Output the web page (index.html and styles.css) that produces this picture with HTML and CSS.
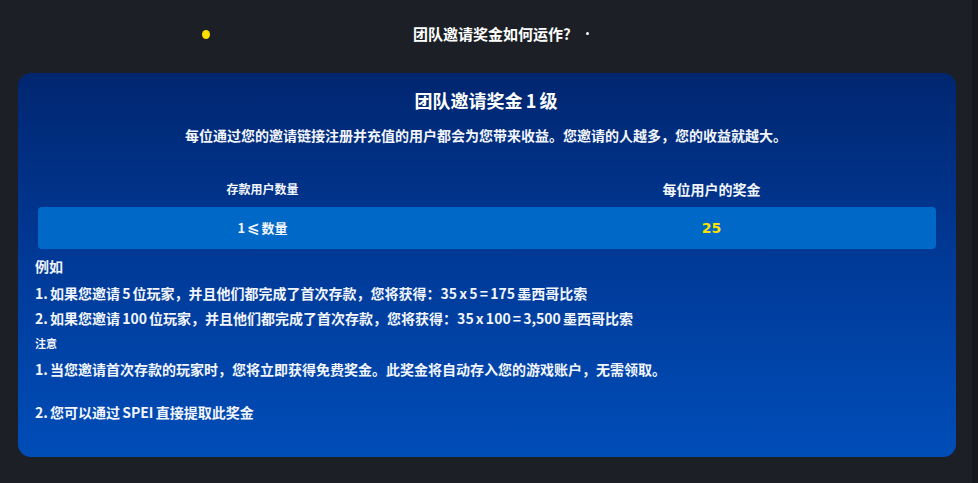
FILE: index.html
```html
<!DOCTYPE html>
<html lang="zh">
<head>
<meta charset="utf-8">
<title>团队邀请奖金</title>
<link rel="stylesheet" href="styles.css">
</head>
<body>
<div class="page">
  <main class="main">
    <header class="head">
      <span class="dot-yellow"></span>
      <h1 class="head-title">团队邀请奖金如何运作?</h1>
      <span class="dot-white"></span>
    </header>
    <section class="card">
      <h2 class="card-title">团队邀请奖金 1 级</h2>
      <p class="card-sub">每位通过您的邀请链接注册并充值的用户都会为您带来收益。您邀请的人越多，您的收益就越大。</p>
      <div class="table">
        <div class="thead">
          <div class="th th-small">存款用户数量</div>
          <div class="th">每位用户的奖金</div>
        </div>
        <div class="trow">
          <div class="td">1 <span class="le">⩽</span> 数量</div>
          <div class="td td-value">25</div>
        </div>
      </div>
      <div class="notes">
        <div class="label">例如</div>
        <div class="line line-first">1. 如果您邀请 5 位玩家，并且他们都完成了首次存款，您将获得：35 x 5 = 175 墨西哥比索</div>
        <div class="line">2. 如果您邀请 100 位玩家，并且他们都完成了首次存款，您将获得：35 x 100 = 3,500 墨西哥比索</div>
        <div class="label label-small">注意</div>
        <div class="line line-note1">1. 当您邀请首次存款的玩家时，您将立即获得免费奖金。此奖金将自动存入您的游戏账户，无需领取。</div>
        <div class="line line-note2">2. 您可以通过 SPEI 直接提取此奖金</div>
      </div>
    </section>
  </main>
  <div class="scrollbar"></div>
</div>
</body>
</html>
```

FILE: styles.css
```css
* { box-sizing: border-box; }
html, body {
  margin: 0;
  padding: 0;
  height: 100%;
  background: #1c1f26;
}
body {
  font-family: "Noto Sans CJK SC", "Noto Sans", sans-serif;
  color: #f2f5fc;
  font-weight: 700;
  word-spacing: -1px;
}
.page {
  display: flex;
  height: 483px;
  overflow: hidden;
}
.main {
  flex: 1;
  min-width: 0;
}
.scrollbar {
  width: 6px;
  background: #16181e;
}
.head {
  display: flex;
  align-items: center;
  height: 67px;
  padding-left: 202px;
}
.dot-yellow {
  width: 8px;
  height: 9px;
  border-radius: 50%;
  background: #ffdf00;
  margin-right: 203px;
  margin-top: 2px;
}
.head-title {
  margin: 0;
  font-size: 15px;
  line-height: 22px;
  font-weight: 700;
  color: #ffffff;
}
.dot-white {
  width: 3px;
  height: 3px;
  border-radius: 50%;
  background: #ffffff;
  margin-left: 15px;
}
.card {
  margin: 6px 16px 0 18px;
  border-radius: 13px;
  background: linear-gradient(180deg, #012670 0%, #003a98 50%, #004db8 100%);
  padding: 15px 20px 31px 17px;
  height: 384px;
}
.card-title {
  margin: 0;
  text-align: center;
  font-size: 18px;
  line-height: 24px;
  font-weight: 700;
  color: #ffffff;
  padding-left: 1px;
}
.card-sub {
  margin: 13px 0 0;
  text-align: center;
  font-size: 14px;
  line-height: 20px;
  padding-left: 1px;
}
.table {
  margin: 34px 0 0 3px;
}
.thead, .trow {
  display: grid;
  grid-template-columns: 1fr 1fr;
}
.th {
  text-align: center;
  font-size: 14px;
  line-height: 20px;
}
.th-small {
  font-size: 12px;
}
.trow {
  margin-top: 8px;
  height: 42px;
  background: #0068c6;
  border-radius: 4px;
  align-items: center;
}
.td {
  text-align: center;
  font-size: 13px;
  line-height: 20px;
}
.le {
  font-family: "DejaVu Sans", sans-serif;
  font-weight: 700;
  font-size: 15px;
}
.td-value {
  color: #ffe100;
  font-family: "DejaVu Sans", "Liberation Sans", sans-serif;
  font-weight: 700;
  font-size: 14px;
}
.notes {
  margin-top: 5px;
}
.label {
  font-size: 14px;
  line-height: 25px;
}
.label-small {
  font-size: 11px;
}
.line {
  font-size: 14px;
  line-height: 25px;
  white-space: nowrap;
}
.line-first { margin-top: 2px; }
.line-note1 { margin-top: 1px; }
.line-note2 { margin-top: 18px; }
```
